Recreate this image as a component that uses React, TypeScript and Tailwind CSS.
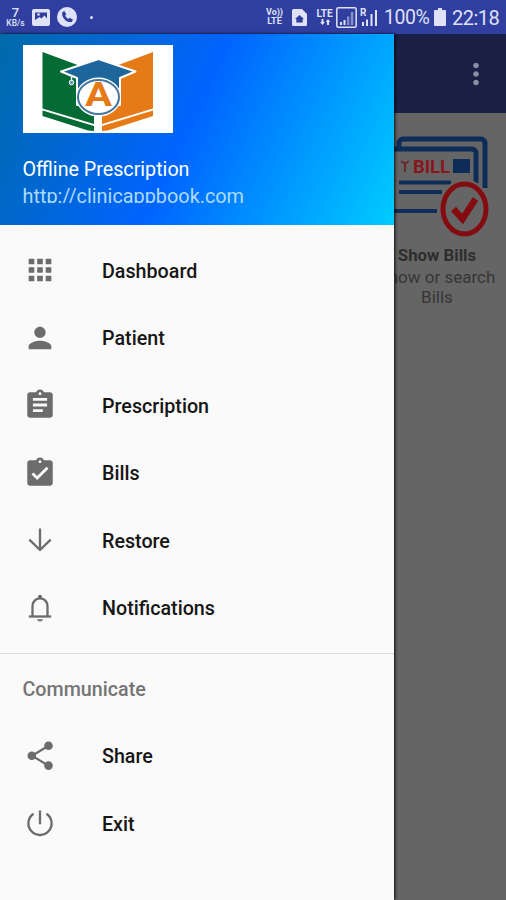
import type { ReactNode } from "react";
import {
	MdApps,
	MdAssignment,
	MdAssignmentTurnedIn,
	MdMoreVert,
	MdPerson,
} from "react-icons/md";

type NavItem = {
	label: string;
	icon: ReactNode;
};

function ArrowDownIcon() {
	return (
		<svg viewBox="0 0 34 34" className="size-[34px]" fill="none" stroke="currentColor" strokeWidth="2.3">
			<path d="M17 5.5v21.500M6.300 16.600 17 27l10.700-10.400" />
		</svg>
	);
}

function BellIcon() {
	return (
		<svg viewBox="0 0 34 34" className="size-[34px]" fill="none" stroke="currentColor" strokeWidth="2.3">
			<path d="M9.500 25V15.500c0-4.700 3-8.200 7.500-8.200s7.500 3.500 7.500 8.200V25" />
			<path d="M5.800 25.500h22.400" />
			<path d="M15 7.500V5.800a2 2 0 0 1 4 0v1.700z" fill="currentColor" stroke="none" />
			<path d="M14 28.200h6c-.5 1.600-1.600 2.200-3 2.200s-2.500-.6-3-2.200z" fill="currentColor" stroke="none" />
		</svg>
	);
}

function ShareIcon() {
	return (
		<svg viewBox="0 0 34 34" className="size-[34px]" fill="currentColor">
			<path d="M25.500 6.700 9 16.700l16.500 10" fill="none" stroke="currentColor" strokeWidth="2.2" />
			<circle cx="25.500" cy="6.800" r="4.300" />
			<circle cx="8.800" cy="16.700" r="4.300" />
			<circle cx="25.500" cy="26.600" r="4.300" />
		</svg>
	);
}

function PowerIcon() {
	return (
		<svg viewBox="0 0 34 34" className="size-[34px]" fill="none" stroke="currentColor" strokeWidth="2.300">
			<path d="M17 4.500v13.800M10.500 7.800a11.600 11.600 0 1 0 13 0" />
		</svg>
	);
}

const mainItems: NavItem[] = [
	{ label: "Dashboard", icon: <MdApps className="size-[34px]" /> },
	{ label: "Patient", icon: <MdPerson className="size-[34px]" /> },
	{ label: "Prescription", icon: <MdAssignment className="size-[34px]" /> },
	{ label: "Bills", icon: <MdAssignmentTurnedIn className="size-[34px]" /> },
	{ label: "Restore", icon: <ArrowDownIcon /> },
	{ label: "Notifications", icon: <BellIcon /> },
];

const communicateItems: NavItem[] = [
	{ label: "Share", icon: <ShareIcon /> },
	{ label: "Exit", icon: <PowerIcon /> },
];

function NavList({ items }: { items: NavItem[] }) {
	return (
		<ul>
			{items.map((item) => (
				<li key={item.label} className="flex h-[67.5px] items-center pl-[22.5px]">
					<span className="w-[79.500px] shrink-0 text-[#6c6c6c]">{item.icon}</span>
					<span className="pt-[3px] text-[19.700px] font-medium text-[#161616]">{item.label}</span>
				</li>
			))}
		</ul>
	);
}

function StatusBar() {
	return (
		<header className="flex h-[34px] shrink-0 items-center bg-[#303f9f] text-[#dfe2f7]">
			<div className="ml-[5px] w-[21px] text-center font-medium">
				<div className="text-[13px] leading-[13px]">7</div>
				<div className="text-[8.500px] leading-[9px]">KB/s</div>
			</div>
			<svg viewBox="0 0 18 17" className="ml-[6px] h-[17px] w-[18px]">
				<rect width="18" height="17" rx="2" fill="currentColor" />
				<path d="M3 3.500h12v6l-2.500-3-3 3-2-1.500L3 11z" fill="#303f9f" />
				<circle cx="6.500" cy="5.500" r="1.300" fill="currentColor" />
			</svg>
			<svg viewBox="0 0 20 20" className="ml-[7px] size-[20px]">
				<circle cx="10" cy="10" r="10" fill="currentColor" />
				<path d="M5.300 5.200 7.400 4l2 3.400-1.300 1.200c.7 1.500 1.800 2.600 3.300 3.400l1.300-1.300 3.300 2-1.200 2.200C9.500 16.200 4 10 5.300 5.200z" fill="#303f9f" />
			</svg>
			<span className="ml-[13px] size-[3px] rounded-full bg-current" />
			<div className="ml-auto flex items-center pr-[8px]">
				<div className="w-[19px] text-center text-[9px] leading-[9px] font-bold">
					<div>Vo))</div>
					<div>LTE</div>
				</div>
				<svg viewBox="0 0 15 17" className="ml-[8px] h-[17px] w-[15px]">
					<path d="M1.500 0H10l5 5v10.500a1.500 1.500 0 0 1-1.500 1.500h-12A1.500 1.500 0 0 1 0 15.500v-14A1.500 1.500 0 0 1 1.500 0z" fill="currentColor" />
					<path d="M7.500 6 3 10h1.300v3.500h6.400V10H12z" fill="#303f9f" />
				</svg>
				<div className="ml-[8px] flex w-[19px] flex-col items-center text-[10px] leading-[10px] font-bold">
					<span>LTE</span>
					<svg viewBox="0 0 10 6" className="h-[6px] w-[10px]" fill="currentColor">
						<path d="M1.500 0h2v3H5L2.500 6 0 3h1.500zM7 6h2V3h1.200L8 0 5.700 3H7z" />
					</svg>
				</div>
				<svg viewBox="0 0 21 21" className="ml-[2px] size-[21px]">
					<rect x=".8" y=".8" width="19.400" height="19.400" rx="1.500" fill="none" stroke="currentColor" strokeWidth="1.500" />
					<path d="M4 15h2v3H4zM7.500 13h2v5h-2z" fill="currentColor" />
					<path d="M11 9.500h2.300V18H11zM14.800 5h2.500v13h-2.500z" fill="currentColor" opacity=".5" />
				</svg>
				<div className="relative ml-[3px] h-[17px] w-[18px]">
					<span className="absolute -top-[1px] left-0 text-[10px] leading-[10px] font-bold">R</span>
					<svg viewBox="0 0 18 17" className="h-[17px] w-[18px]" fill="currentColor">
						<path d="M2 13h2v4H2zM6 10.500h2V17H6zM10.500 5h2v12h-2zM15 1h2v16h-2z" />
					</svg>
				</div>
				<span className="ml-[6px] w-[44px] pt-[1px] text-[19.500px] tracking-[-0.500px]">100%</span>
				<svg viewBox="0 0 12 18" className="ml-[6px] h-[18px] w-[12px]" fill="currentColor">
					<path d="M4 0h4v2h3a1 1 0 0 1 1 1v14a1 1 0 0 1-1 1H1a1 1 0 0 1-1-1V3a1 1 0 0 1 1-1h3z" />
				</svg>
				<span className="ml-[6px] w-[46px] pt-[1px] text-[20px] tracking-[-0.500px]">22:18</span>
			</div>
		</header>
	);
}

function BookLogo() {
	return (
		<svg viewBox="0 0 150 88" className="h-[88px] w-[150px] bg-white">
			<path d="M19.500 7 56 20.500 71 43v36L19.500 63.500z" fill="#056b35" />
			<path d="M19.500 65.500 71 81v5L65 85.500 19.500 71z" fill="#056b35" />
			<path d="M130 7 94 20.500 79 43v36l51-15.500z" fill="#e67a17" />
			<path d="M130 65.500 79 81v5l6-.5L130 71z" fill="#e67a17" />
			<path d="M75.500 14 38 26.500 54 33v27h43V33l15.500-6.500z" fill="#1d669b" stroke="#fff" strokeWidth="2" strokeLinejoin="round" />
			<path d="M48.500 30v7" stroke="#e4eef5" strokeWidth="1.500" />
			<circle cx="48.500" cy="37.500" r="2.300" fill="#6d9eb9" stroke="#fff" />
			<ellipse cx="75.500" cy="52" rx="20.500" ry="17.500" fill="#fff" stroke="#fff" strokeWidth="4" />
			<ellipse cx="75.500" cy="52" rx="20.500" ry="17" fill="#fff" stroke="#43769f" strokeWidth="2" />
			<text x="75.500" y="61" textAnchor="middle" fontSize="33" fontWeight="700" fill="#e67a17" textLength="27" lengthAdjust="spacingAndGlyphs">
				A
			</text>
		</svg>
	);
}

function BillArt() {
	return (
		<svg viewBox="0 0 110 106" className="h-[106px] w-[110px] shrink-0">
			<g fill="none" stroke="#0d2c58" strokeWidth="5">
				<path d="M17 14V8a4 4 0 0 1 4-4h78a4 4 0 0 1 4 4v45" />
				<path d="M8 76V18a4 4 0 0 1 4-4h78a4 4 0 0 1 4 4v30" />
				<path d="M8 76h47M17 47.500h52M17 57h43" strokeWidth="4" />
			</g>
			<path d="m19 26 4 3 4-3M23 27v10" stroke="#6d282b" strokeWidth="2" fill="none" />
			<text x="31" y="38" fontSize="18" fontWeight="700" fill="#89151d" textLength="37" lengthAdjust="spacingAndGlyphs">
				BILL
			</text>
			<path d="M71 24h17v14H71z" fill="#0d2c58" />
			<ellipse cx="82.500" cy="74" rx="25.500" ry="30" fill="#656565" />
			<ellipse cx="82.500" cy="74" rx="21.500" ry="25" fill="none" stroke="#840b10" strokeWidth="5" />
			<path d="m71.500 74 9 10 13-20" fill="none" stroke="#840b10" strokeWidth="6.500" />
		</svg>
	);
}

export default function App() {
	return (
		<div className="flex h-[900px] w-[506px] flex-col overflow-hidden bg-[#656565] font-[Roboto,sans-serif]">
			<StatusBar />
			<div className="flex min-h-0 flex-1">
				{/* Drawer */}
				<nav className="z-10 w-[394px] shrink-0 bg-[#fafafa] shadow-[1px_0_3px_rgba(0,0,0,0.900)]">
					<div className="h-[191px] bg-[linear-gradient(115deg,#006aa8_0%,#0064ff_48%,#00ccff_100%)] pt-[11px] pl-[22.5px]">
						<BookLogo />
						<p className="mt-[25px] text-[19.700px] leading-[24px] text-white">
							Offline Prescription
						</p>
						<p className="mt-[3px] h-[18px] overflow-hidden text-[19.850px] leading-[24px] text-[#addbff]">
							http://clinicappbook.com
						</p>
					</div>
					<div className="pt-[11.500px]">
						<NavList items={mainItems} />
					</div>
					<div className="mt-[11.500px] border-t-[1.500px] border-[#dcdcdc]">
						<h2 className="flex h-[68px] items-center pt-[3px] pl-[22.5px] text-[19.700px] font-medium text-[#757575]">
							Communicate
						</h2>
						<NavList items={communicateItems} />
					</div>
				</nav>

				{/* Dimmed screen behind the drawer */}
				<main className="min-w-0 flex-1">
					<div className="flex h-[79px] items-center justify-end bg-[#1a1f45] pr-[13px]">
						<MdMoreVert className="size-[34px] text-[#8b8da0]" />
					</div>
					<div className="-ml-[13px] flex w-[112px] flex-col items-center pt-[22px]">
						<BillArt />
						<p className="mt-[3px] text-[16.800px] leading-[22px] font-bold whitespace-nowrap text-[#2d2d2d]">
							Show Bills
						</p>
						<p className="mt-[2px] w-[120px] text-center text-[17px] leading-[19.500px] text-[#363636]">
							Show or search Bills
						</p>
					</div>
				</main>
			</div>
		</div>
	);
}
